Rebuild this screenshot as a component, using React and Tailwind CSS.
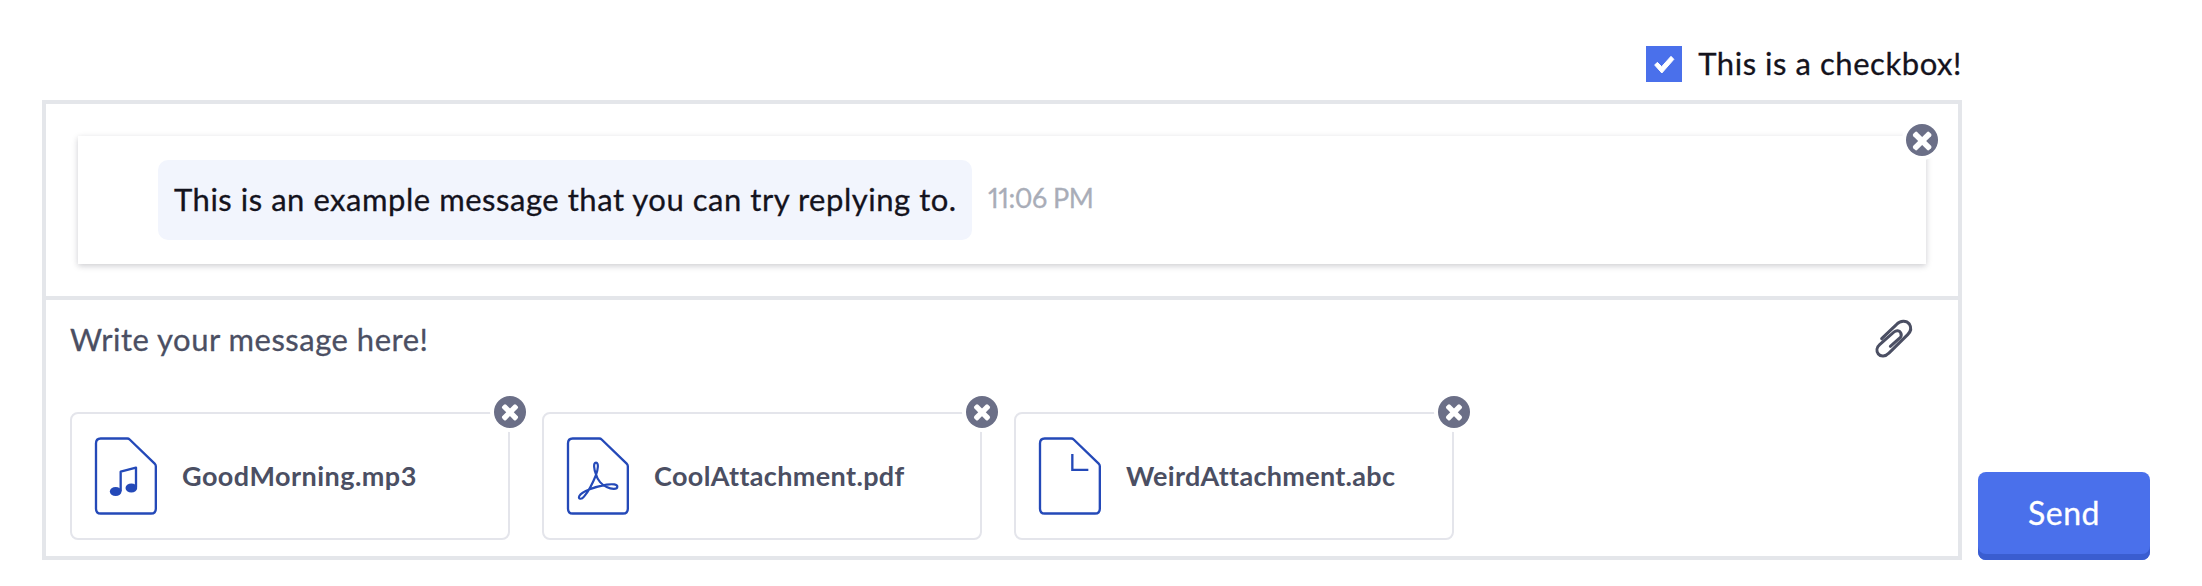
import React from "react";

function CloseBadge({ large = false }) {
  const arm = large ? 34 : 29;
  const half = large ? 8.5 : 8;
  return (
    <button aria-label="Remove" className="absolute -top-[18px] -right-[18px] h-8 w-8 rounded-full bg-[#6b6f87] ring-4 ring-white">
      <svg viewBox="0 0 96 96" className="block h-8 w-8" fill="white">
        <g transform={large ? "translate(48.5 51)" : "translate(48 49)"}>
          <rect x={-arm} y={-half} width={arm * 2} height={half * 2} rx="5" transform="rotate(45)" />
          <rect x={-arm} y={-half} width={arm * 2} height={half * 2} rx="5" transform="rotate(-45)" />
        </g>
      </svg>
    </button>
  );
}

function FileIcon({ children }) {
  return (
    <svg viewBox="0 0 228 270" className="block h-[90px] w-[76px] shrink-0" fill="none" stroke="#2449b8" strokeWidth="7">
      <path d="M38 25.500H118Q122 25.500 125 28.500L200 101Q203.500 104.500 203.500 109V236Q203.500 250.500 189 250.500H38Q24 250.500 24 236V40Q24 25.500 38 25.500Z" />
      {children}
    </svg>
  );
}

function MusicGlyph() {
  return (
    <g>
      <path d="M98 184V125L144 113V172" strokeLinejoin="round" />
      <ellipse cx="83" cy="184.500" rx="17.500" ry="13.500" fill="#2449b8" stroke="none" />
      <ellipse cx="130" cy="174" rx="17.500" ry="13.500" fill="#2449b8" stroke="none" />
    </g>
  );
}

function PdfGlyph() {
  return (
    <path
      d="M108 133C102 118 99 98 108 98C117 98 114 118 108 135C100 155 84 186 72 200C64 210 53 207 58 198C66 184 106 170 140 164C158 161 172 163 172 170C172 179 154 178 140 171C126 166 112 150 108 133Z"
      strokeWidth="6.5"
      strokeLinejoin="round"
    />
  );
}

function BlankGlyph() {
  return <path d="M121 72V119.500H169" />;
}

const attachments = [
  { name: "GoodMorning.mp3", glyph: <MusicGlyph />, spacing: "tracking-[0.46px]" },
  { name: "CoolAttachment.pdf", glyph: <PdfGlyph />, spacing: "tracking-[0.36px]" },
  { name: "WeirdAttachment.abc", glyph: <BlankGlyph />, spacing: "tracking-[0.3px]" },
];

export default function App() {
  return (
    <div className="h-[586px] w-[2202px] bg-white pt-[46px] pl-[42px] font-['Lato',sans-serif] text-[31px] text-[#14131d] [font-variant-ligatures:none] [-webkit-text-stroke:0.3px_currentColor]">
      <label className="flex h-9 w-[1920px] items-center justify-end gap-4">
        <span className="h-9 w-9 bg-[#4a70eb]">
          <svg viewBox="0 0 108 108" className="block h-9 w-9" fill="white" stroke="white" strokeWidth="3" strokeLinejoin="round">
            <path d="M26 57L34 49L47 62L75 31L83.500 40L47.500 81Z" />
          </svg>
        </span>
        <span className="pb-[2px] leading-9 tracking-[0.55px]">This is a checkbox!</span>
      </label>

      <div className="mt-[18px] flex items-end gap-4">
        <div className="h-[460px] w-[1920px] border-4 border-[#e4e6ea]">
          <div className="h-[196px] border-b-4 border-[#e4e6ea] px-8 pt-8">
            <div className="relative flex h-32 items-center bg-white pl-20 shadow-[0_2px_6px_rgba(26,28,45,0.22)]">
              <div className="flex h-20 w-[814px] items-center rounded-[10px] bg-[#f2f5fd] pb-[2px] pl-4 whitespace-nowrap tracking-[0.53px]">
                This is an example message that you can try replying to.
              </div>
              <div className="pb-[3px] pl-4 text-[27px] tracking-[-0.5px] whitespace-nowrap text-[#a9adb8] [font-variant-numeric:proportional-nums]">
                11:06 PM
              </div>
              <div className="absolute top-[6px] right-[6px]">
                <CloseBadge large />
              </div>
            </div>
          </div>

          <div className="flex items-start justify-between pt-[18px] pr-[46px] pl-6">
            <div className="pt-px leading-10 tracking-[0.5px] text-[#4b4f63]">Write your message here!</div>
            <svg viewBox="0 0 150 150" className="-mt-1.5 -mr-2 block h-[50px] w-[50px]" fill="none" stroke="#4b4f63" strokeWidth="9" strokeLinecap="round" strokeLinejoin="round">
              <path d="M35 80L80 37C91 25 109 24 118 36C125 47 122 59 113 68L56 124C47 134 32 135 25 126C18 117 20 106 29 98L72 60C79 54 88 55 92 62C96 69 92 76 87 80L61 103" />
            </svg>
          </div>

          <div className="mt-[50px] flex gap-8 pl-6">
            {attachments.map((file) => (
              <div key={file.name} className="relative flex h-32 w-[440px] items-center gap-[18px] rounded-lg border-2 border-[#e4e5eb] pb-[2px] pl-4">
                <FileIcon>{file.glyph}</FileIcon>
                <span className={`mt-[3px] text-[27px] font-bold text-[#4b4f63] [-webkit-text-stroke:0] ${file.spacing}`}>{file.name}</span>
                <CloseBadge />
              </div>
            ))}
          </div>
        </div>

        <button className="flex h-[88px] w-[172px] items-center justify-center rounded-lg bg-[#4a70eb] pb-[6px] text-[32px] tracking-[0.5px] text-white shadow-[inset_0_-6px_0_#3a5dd0]">
          Send
        </button>
      </div>
    </div>
  );
}
